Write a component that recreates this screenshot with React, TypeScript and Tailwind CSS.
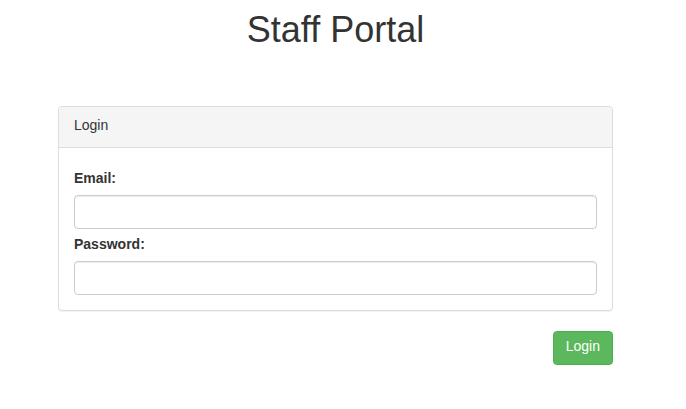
import React from "react";

export default function App() {
  return (
    <div
      className="w-[671px] min-h-[409px] bg-white text-[#333] text-[14px] leading-[20px]"
      style={{ fontFamily: '"Liberation Sans", Arial, sans-serif' }}
    >
      <h1 className="mt-[10px] text-center text-[36px] leading-[39.6px] font-normal text-[#333]">
        Staff Portal
      </h1>
      <div className="px-[58px] mt-[56px]">
        <div className="border border-[#ddd] rounded-[4px] bg-white shadow-[0_1px_1px_rgba(0,0,0,0.05)]">
          <div className="bg-[#f5f5f5] border-b border-[#ddd] rounded-t-[3px] px-[15px] pt-[8px] pb-[12px]">
            Login
          </div>
          <div className="px-[15px] pt-[20px] pb-[15px]">
            <label className="block font-bold mb-[7px]">Email:</label>
            <input
              type="email"
              className="block w-full h-[34px] border border-[#ccc] rounded-[4px] px-[12px] shadow-[inset_0_1px_1px_rgba(0,0,0,0.075)] outline-none"
            />
            <label className="block font-bold mt-[5px] mb-[7px]">Password:</label>
            <input
              type="password"
              className="block w-full h-[34px] border border-[#ccc] rounded-[4px] px-[12px] shadow-[inset_0_1px_1px_rgba(0,0,0,0.075)] outline-none"
            />
          </div>
        </div>
        <div className="flex justify-end mt-[20px]">
          <button className="h-[34px] px-[12px] pt-[4px] pb-[8px] border border-[#4cae4c] bg-[#5cb85c] text-white rounded-[4px] text-[14px] leading-[20px]">
            Login
          </button>
        </div>
      </div>
    </div>
  );
}
